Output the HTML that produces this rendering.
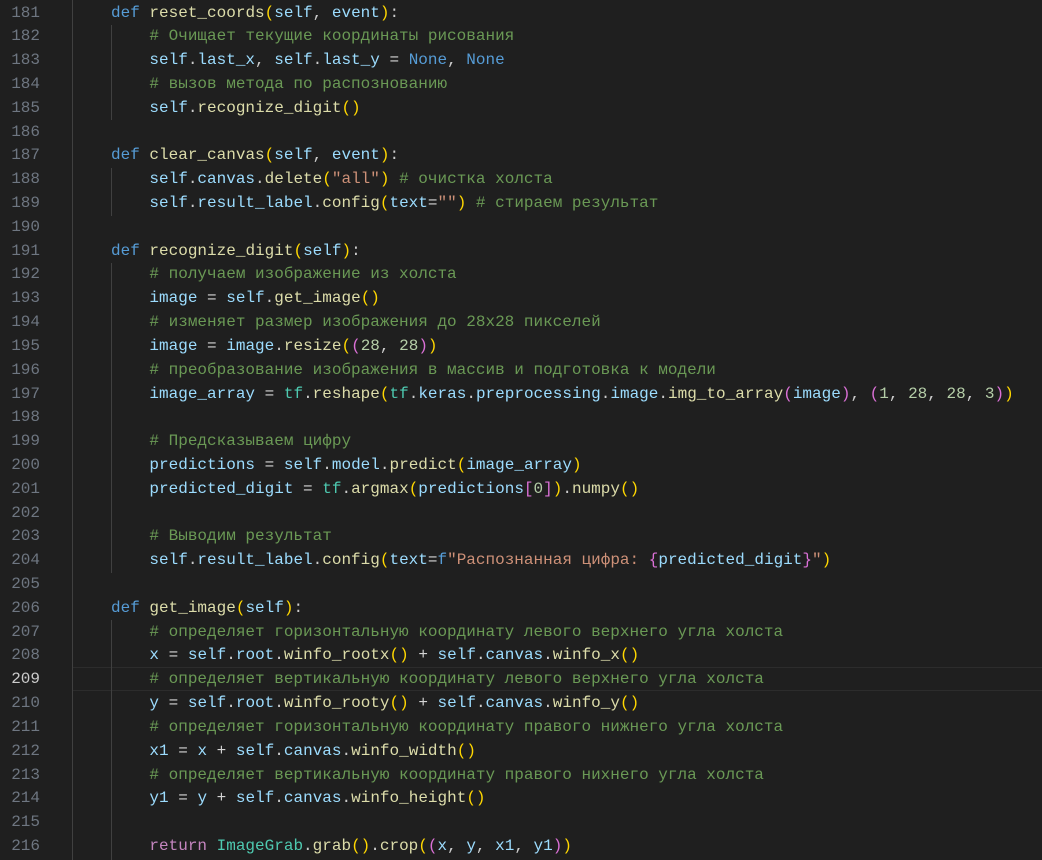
<!DOCTYPE html>
<html><head><meta charset="utf-8"><style>
html,body{margin:0;padding:0;background:#1f1f1f;width:1042px;height:860px;overflow:hidden}
.ln{position:absolute;left:0;top:1.5px;width:40px;text-align:right;color:#6e7681;font:16px/23.82px "Liberation Mono","DejaVu Sans Mono",monospace;white-space:pre;margin:0}
.code{position:absolute;left:72.6px;top:1.5px;color:#cccccc;font:16px/23.82px "Liberation Mono","DejaVu Sans Mono",monospace;white-space:pre;margin:0}
.cur{position:absolute;left:72px;right:0;top:667px;height:21.8px;border-top:1px solid #2c2c2c;border-bottom:1px solid #2c2c2c}
.g{position:absolute;width:1px;background:#404040}
.k{color:#569cd6}.f{color:#dcdcaa}.v{color:#9cdcfe}.c{color:#6a9955}.s{color:#ce9178}.n{color:#b5cea8}
.b1{color:#ffd700}.b2{color:#da70d6}.b3{color:#179fff}.t{color:#4ec9b0}.r{color:#c586c0}.o{color:#d4d4d4}
</style></head><body>
<div class="cur"></div>
<div class="g" style="left:72px;top:0;height:860px"></div>
<div class="g" style="left:111px;top:25px;height:95px"></div>
<div class="g" style="left:111px;top:168px;height:48px"></div>
<div class="g" style="left:111px;top:263px;height:310px"></div>
<div class="g" style="left:111px;top:620px;height:240px"></div>
<pre class="ln">181
182
183
184
185
186
187
188
189
190
191
192
193
194
195
196
197
198
199
200
201
202
203
204
205
206
207
208
<span style="color:#cccccc">209</span>
210
211
212
213
214
215
216</pre>
<pre class="code">    <span class="k">def</span> <span class="f">reset_coords</span><span class="b1">(</span><span class="v">self</span>, <span class="v">event</span><span class="b1">)</span>:
        <span class="c"># Очищает текущие координаты рисования</span>
        <span class="v">self</span>.<span class="v">last_x</span>, <span class="v">self</span>.<span class="v">last_y</span> <span class="o">=</span> <span class="k">None</span>, <span class="k">None</span>
        <span class="c"># вызов метода по распознованию</span>
        <span class="v">self</span>.<span class="f">recognize_digit</span><span class="b1">()</span>

    <span class="k">def</span> <span class="f">clear_canvas</span><span class="b1">(</span><span class="v">self</span>, <span class="v">event</span><span class="b1">)</span>:
        <span class="v">self</span>.<span class="v">canvas</span>.<span class="f">delete</span><span class="b1">(</span><span class="s">"all"</span><span class="b1">)</span> <span class="c"># очистка холста</span>
        <span class="v">self</span>.<span class="v">result_label</span>.<span class="f">config</span><span class="b1">(</span><span class="v">text</span><span class="o">=</span><span class="s">""</span><span class="b1">)</span> <span class="c"># стираем результат</span>

    <span class="k">def</span> <span class="f">recognize_digit</span><span class="b1">(</span><span class="v">self</span><span class="b1">)</span>:
        <span class="c"># получаем изображение из холста</span>
        <span class="v">image</span> <span class="o">=</span> <span class="v">self</span>.<span class="f">get_image</span><span class="b1">()</span>
        <span class="c"># изменяет размер изображения до 28x28 пикселей</span>
        <span class="v">image</span> <span class="o">=</span> <span class="v">image</span>.<span class="f">resize</span><span class="b1">(</span><span class="b2">(</span><span class="n">28</span>, <span class="n">28</span><span class="b2">)</span><span class="b1">)</span>
        <span class="c"># преобразование изображения в массив и подготовка к модели</span>
        <span class="v">image_array</span> <span class="o">=</span> <span class="t">tf</span>.<span class="f">reshape</span><span class="b1">(</span><span class="t">tf</span>.<span class="v">keras</span>.<span class="v">preprocessing</span>.<span class="v">image</span>.<span class="f">img_to_array</span><span class="b2">(</span><span class="v">image</span><span class="b2">)</span>, <span class="b2">(</span><span class="n">1</span>, <span class="n">28</span>, <span class="n">28</span>, <span class="n">3</span><span class="b2">)</span><span class="b1">)</span>

        <span class="c"># Предсказываем цифру</span>
        <span class="v">predictions</span> <span class="o">=</span> <span class="v">self</span>.<span class="v">model</span>.<span class="f">predict</span><span class="b1">(</span><span class="v">image_array</span><span class="b1">)</span>
        <span class="v">predicted_digit</span> <span class="o">=</span> <span class="t">tf</span>.<span class="f">argmax</span><span class="b1">(</span><span class="v">predictions</span><span class="b2">[</span><span class="n">0</span><span class="b2">]</span><span class="b1">)</span>.<span class="f">numpy</span><span class="b1">()</span>

        <span class="c"># Выводим результат</span>
        <span class="v">self</span>.<span class="v">result_label</span>.<span class="f">config</span><span class="b1">(</span><span class="v">text</span><span class="o">=</span><span class="k">f</span><span class="s">"Распознанная цифра: </span><span class="b2">{</span><span class="v">predicted_digit</span><span class="b2">}</span><span class="s">"</span><span class="b1">)</span>

    <span class="k">def</span> <span class="f">get_image</span><span class="b1">(</span><span class="v">self</span><span class="b1">)</span>:
        <span class="c"># определяет горизонтальную координату левого верхнего угла холста</span>
        <span class="v">x</span> <span class="o">=</span> <span class="v">self</span>.<span class="v">root</span>.<span class="f">winfo_rootx</span><span class="b1">()</span> <span class="o">+</span> <span class="v">self</span>.<span class="v">canvas</span>.<span class="f">winfo_x</span><span class="b1">()</span>
        <span class="c"># определяет вертикальную координату левого верхнего угла холста</span>
        <span class="v">y</span> <span class="o">=</span> <span class="v">self</span>.<span class="v">root</span>.<span class="f">winfo_rooty</span><span class="b1">()</span> <span class="o">+</span> <span class="v">self</span>.<span class="v">canvas</span>.<span class="f">winfo_y</span><span class="b1">()</span>
        <span class="c"># определяет горизонтальную координату правого нижнего угла холста</span>
        <span class="v">x1</span> <span class="o">=</span> <span class="v">x</span> <span class="o">+</span> <span class="v">self</span>.<span class="v">canvas</span>.<span class="f">winfo_width</span><span class="b1">()</span>
        <span class="c"># определяет вертикальную координату правого нихнего угла холста</span>
        <span class="v">y1</span> <span class="o">=</span> <span class="v">y</span> <span class="o">+</span> <span class="v">self</span>.<span class="v">canvas</span>.<span class="f">winfo_height</span><span class="b1">()</span>

        <span class="r">return</span> <span class="t">ImageGrab</span>.<span class="f">grab</span><span class="b1">()</span>.<span class="f">crop</span><span class="b1">(</span><span class="b2">(</span><span class="v">x</span>, <span class="v">y</span>, <span class="v">x1</span>, <span class="v">y1</span><span class="b2">)</span><span class="b1">)</span></pre>
</body></html>
